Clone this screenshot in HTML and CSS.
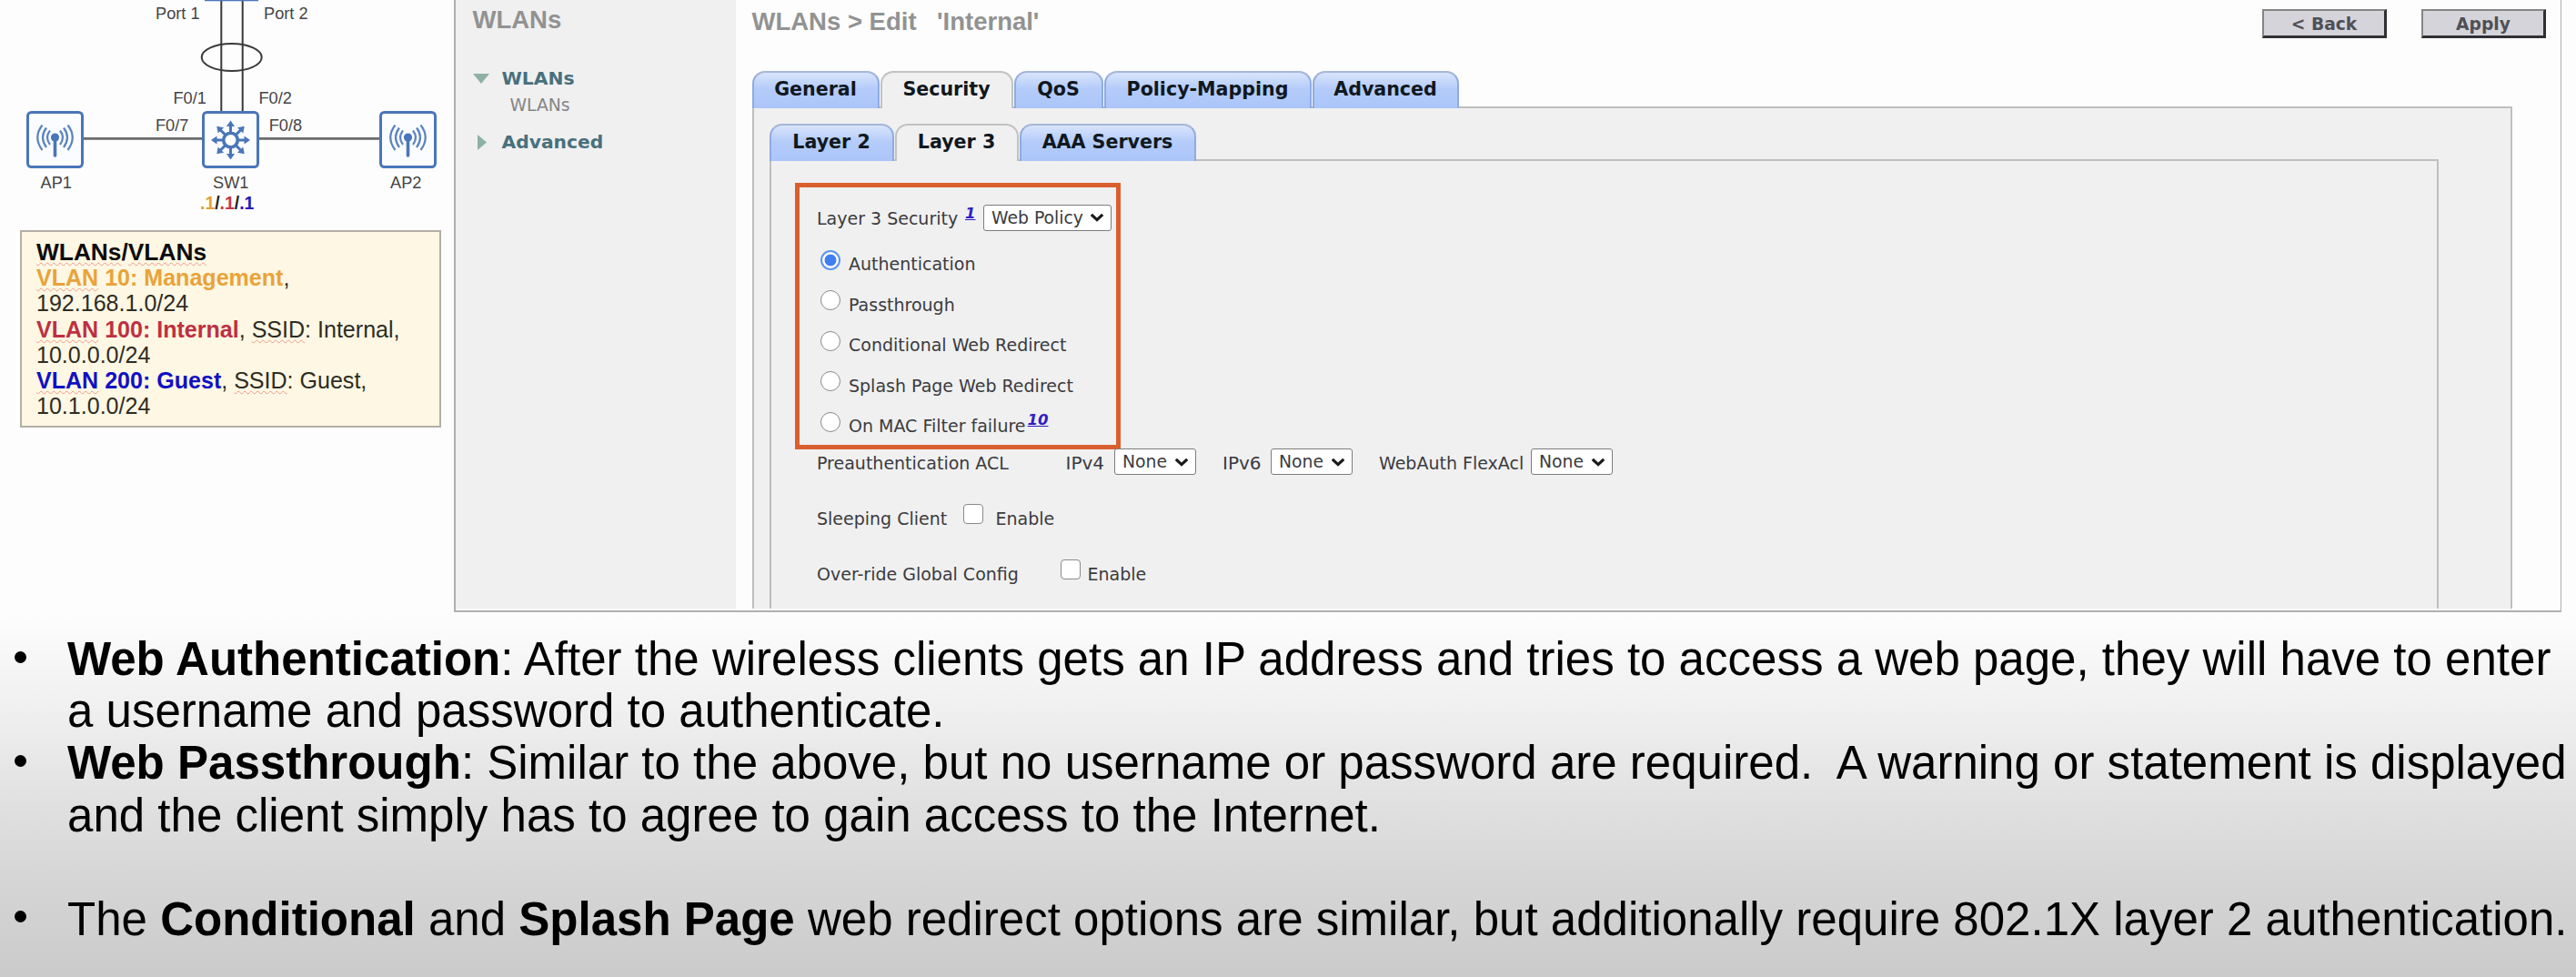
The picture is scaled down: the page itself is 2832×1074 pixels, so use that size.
FILE: index.html
```html
<!DOCTYPE html>
<html lang="en">
<head>
<meta charset="utf-8">
<title>WLANs &gt; Edit 'Internal'</title>
<link rel="stylesheet" href="styles.css">
</head>
<body>
<svg width="0" height="0" class="defs" aria-hidden="true">
  <symbol id="chevron" viewBox="0 0 16 10"><path d="M1.8 1.8 8 7.6 14.2 1.8" fill="none" stroke="#1a1a1a" stroke-width="3.2"/></symbol>
  <symbol id="ap" viewBox="0 0 64 64">
    <rect x="1.5" y="1.5" width="60" height="60" rx="4" fill="#fbfcff" stroke="#4a76b8" stroke-width="3"/>
    <g fill="none" stroke="#5b83c0" stroke-width="2.2">
      <path d="M17.5 15.5Q7 29 17.5 43M22 18.5Q14 29 22 40M26 21.5Q20 29 26 37"/>
      <path d="M45.500 15.500Q56 29 45.500 43M41 18.500Q49 29 41 40M37 21.500Q43 29 37 37"/>
    </g>
    <circle cx="31.500" cy="29" r="4.600" fill="#4a76b8"/>
    <path d="M31.500 29V49" stroke="#4a76b8" stroke-width="3.600" stroke-linecap="round"/>
  </symbol>
  <symbol id="spoke" viewBox="-24 -24 48 48"><path d="M0-8V-17" stroke="#4a76b8" stroke-width="3"/><path d="M0-21.500 4.500-15H-4.500Z" fill="#4a76b8"/></symbol>
</svg>
<main class="slide">
  <section class="top">
    <aside class="topology">
      <svg class="diagram" width="499" height="246" viewBox="0 0 499 246">
        <g fill="none" stroke="#3a3a3a" stroke-width="2">
          <path d="M243.300 0V123M266.700 0V123"/>
          <ellipse cx="254.700" cy="63" rx="33" ry="15"/>
        </g>
        <path d="M225 0H284" stroke="#4a76b8" stroke-width="2.500"/>
        <path d="M91 152.300H223M284 152.300H418" stroke="#6b6b6b" stroke-width="2.800"/>
        <use href="#ap" x="29" y="122" width="64" height="64"/>
        <use href="#ap" x="417" y="122" width="64" height="64"/>
        <rect x="223.500" y="123.500" width="60" height="60" rx="4" fill="#fbfcff" stroke="#4a76b8" stroke-width="3"/>
        <g transform="translate(253.500 154)">
          <circle r="7.800" fill="#fff" stroke="#4a76b8" stroke-width="3.600"/>
          <g id="cross"><use href="#spoke" x="-24" y="-24" width="48" height="48"/><use href="#spoke" x="-24" y="-24" width="48" height="48" transform="rotate(90)"/><use href="#spoke" x="-24" y="-24" width="48" height="48" transform="rotate(180)"/><use href="#spoke" x="-24" y="-24" width="48" height="48" transform="rotate(270)"/></g>
          <use href="#cross" transform="rotate(45)"/>
        </g>
        <g class="labels">
          <text x="171" y="21">Port 1</text><text x="290" y="21">Port 2</text>
          <text x="190.500" y="114">F0/1</text><text x="284.500" y="114">F0/2</text>
          <text x="171" y="143.500">F0/7</text><text x="295.700" y="143.500">F0/8</text>
          <text x="44.500" y="206.500">AP1</text><text x="234" y="206.500">SW1</text><text x="429" y="206.500">AP2</text>
        </g>
        <text class="hosts" x="220" y="229.500"><tspan class="orange">.1</tspan>/<tspan class="red">.1</tspan>/<tspan class="blue">.1</tspan></text>
      </svg>
      <div class="note">
        <p class="note-title"><b><u>WLANs</u>/<u>VLANs</u></b></p>
        <p><b class="orange"><u>VLAN</u> 10: Management</b>,</p>
        <p>192.168.1.0/24</p>
        <p><b class="red"><u>VLAN</u> 100: Internal</b>, <u>SSID</u>: Internal,</p>
        <p>10.0.0.0/24</p>
        <p><b class="blue"><u>VLAN</u> 200: Guest</b>, <u>SSID</u>: Guest,</p>
        <p>10.1.0.0/24</p>
      </div>
    </aside>

    <div class="wlc">
      <nav class="side">
        <h2>WLANs</h2>
        <div class="nav-item"><svg width="32" height="20" viewBox="0 0 32 20"><path d="M0 5H18L9 16Z" fill="#8fb0a4"/></svg>WLANs</div>
        <div class="nav-sub">WLANs</div>
        <div class="nav-item second"><svg width="32" height="20" viewBox="0 0 32 20"><path d="M5 2V19L15 10.500Z" fill="#8fb0a4"/></svg>Advanced</div>
      </nav>
      <div class="content">
        <header class="head">
          <h1><span class="crumb">WLANs &gt; Edit</span><span>'Internal'</span></h1>
          <div class="actions"><button>&lt; Back</button><button>Apply</button></div>
        </header>
        <div class="tabs">
          <div class="tab t-general">General</div><div class="tab active t-security">Security</div><div class="tab t-qos">QoS</div><div class="tab t-policy">Policy-Mapping</div><div class="tab t-advanced">Advanced</div>
        </div>
        <div class="outer">
          <div class="tabs">
            <div class="tab t-l2">Layer 2</div><div class="tab active t-l3">Layer 3</div><div class="tab t-aaa">AAA Servers</div>
          </div>
          <div class="inner">
            <div class="highlight">
              <div class="row policy"><span>Layer 3 Security</span><a class="ref">1</a><span class="select">Web Policy<svg width="16" height="10"><use href="#chevron"/></svg></span></div>
              <label class="option"><input type="radio" name="l3" checked>Authentication</label>
              <label class="option"><input type="radio" name="l3">Passthrough</label>
              <label class="option"><input type="radio" name="l3">Conditional Web Redirect</label>
              <label class="option"><input type="radio" name="l3">Splash Page Web Redirect</label>
              <label class="option"><input type="radio" name="l3">On MAC Filter failure<a class="ref">10</a></label>
            </div>
            <div class="row acl"><span class="up">Preauthentication ACL</span><span class="ipv">IPv4</span><span class="select">None<svg width="16" height="10"><use href="#chevron"/></svg></span><span class="ipv">IPv6</span><span class="select">None<svg width="16" height="10"><use href="#chevron"/></svg></span><span>WebAuth FlexAcl</span><span class="select">None<svg width="16" height="10"><use href="#chevron"/></svg></span></div>
            <label class="row sleeping"><span>Sleeping Client</span><input type="checkbox"><span>Enable</span></label>
            <label class="row override"><span>Over-ride Global Config</span><input type="checkbox"><span>Enable</span></label>
          </div>
        </div>
      </div>
    </div>
  </section>

  <ul class="bullets">
    <li><b>Web Authentication</b>: After the wireless clients gets an IP address and tries to access a web page, they will have to enter<br>a username and password to authenticate.</li>
    <li><b>Web Passthrough</b>: Similar to the above, but no username or password are required.&nbsp; A warning or statement is displayed<br>and the client simply has to agree to gain access to the Internet.</li>
    <li class="spaced">The <b>Conditional</b> and <b>Splash Page</b> web redirect options are similar, but additionally require 802.1X layer 2 authentication.</li>
  </ul>
</main>
</body>
</html>
```
FILE: styles.css
```css
* { box-sizing: border-box; }
body { margin: 0; font-family: "Liberation Sans", Arial, sans-serif; color: #000; }
.defs { display: block; height: 0; }
.slide {
  width: 2832px; height: 1074px; overflow: hidden;
  background: linear-gradient(#fdfdfd 0, #fdfdfd 680px, #f5f5f5 735px, #ededed 800px, #e1e1e1 880px, #d6d6d6 960px, #cbcbcb 1074px);
}
.top { display: flex; height: 673px; }
.orange { color: #e8a33a; fill: #e0a23c; }
.red { color: #bd3040; fill: #c03a4c; }
.blue { color: #1010c4; fill: #2a18b8; }

/* topology */
.topology { flex: none; width: 499px; }
.diagram { display: block; }
.labels { font-size: 18.2px; fill: #454545; }
.hosts { font-size: 19.4px; font-weight: bold; fill: #222; }
.note {
  width: 463px; height: 217px; margin: 7px 0 0 22px; padding: 8px 0 0 16px;
  border: 2px solid #b3afa6; background: #fdf7e3;
  font-size: 25.050px; line-height: 28.200px; color: #2e2c24; white-space: nowrap;
}
.note p { margin: 0; }
.note-title { font-size: 26.300px; color: #0c0c0c; }
.note u { text-decoration: underline wavy rgba(225, 90, 80, .55) 1px; text-underline-offset: 2px; text-decoration-skip-ink: none; }

/* controller window */
.wlc {
  display: flex; flex: none; width: 2317px; height: 673px; padding-bottom: 2px;
  border: solid #b0b0b0; border-width: 0 1.500px 2px 2px; background: #fdfdfd;
  font-family: "DejaVu Sans", Verdana, sans-serif; font-size: 19px; color: #3b3b3f;
}
.side { flex: none; width: 308px; padding-left: 18.500px; background: #f0f0f0; }
h1, h2 { margin: 0; font: bold 27.500px "Liberation Sans", Arial, sans-serif; color: #929292; white-space: nowrap; }
.side h2 { line-height: 43px; margin-bottom: 28px; }
.nav-item { display: flex; align-items: center; height: 30px; font-weight: bold; font-size: 20.300px; color: #48707e; }
.nav-sub { height: 29px; line-height: 30px; padding-left: 41px; font-size: 18.800px; color: #858585; }
.second { margin-top: 11px; }
.content { flex: 1; display: flex; flex-direction: column; padding-left: 17.500px; min-width: 0; }
.head { display: flex; flex: none; justify-content: space-between; height: 78px; padding-right: 16px; }
h1 { display: flex; line-height: 47px; }
.crumb { width: 203.500px; }
.actions { display: flex; gap: 38px; padding-top: 9.500px; }
button {
  width: 137px; height: 32px; padding: 2px 0 0; border: solid; border-width: 2px 3px 3px 2px;
  border-color: #858585 #303034 #303034 #858585; background: #d5d4da;
  font: bold 18.700px "DejaVu Sans", Verdana, sans-serif; color: #505056;
}
.tabs { display: flex; flex: none; gap: 1px; height: 41px; margin-bottom: -2px; position: relative; }
.tab {
  display: flex; align-items: center; justify-content: center; height: 41px; padding-bottom: 3px;
  border: 2px solid #8fabe0; border-top-color: #a5b6d8; border-bottom: 0; border-radius: 14px 14px 0 0;
  background: linear-gradient(#d8e4fb, #b5ccfa 45%, #abc5f9);
  font-size: 20.600px; font-weight: bold; color: #101820; white-space: nowrap;
}
.tab.active { border-color: #c2c2c2; background: #f0f0f0; }
.t-general { width: 140px; } .t-security { width: 146px; } .t-qos { width: 98px; }
.t-policy { width: 228px; } .t-advanced { width: 161px; }
.t-l2 { width: 137px; } .t-l3 { width: 136px; } .t-aaa { width: 194px; }
.outer {
  flex: 1; width: 1935px; padding: 17px 0 0 17px; display: flex; flex-direction: column;
  border: 2px solid #bebebe; border-bottom: 0; background: #f0f0f0; min-height: 0;
}
.inner { flex: 1; width: 1835px; padding: 24px 0 0 26px; border: 2px solid #bebebe; border-bottom: 0; min-height: 0; }

/* form */
.highlight { width: 358.500px; height: 293px; padding: 6.500px 0 0 19.500px; border: 5px solid #d9602e; }
.row { display: grid; align-items: center; height: 31px; white-space: nowrap; }
.row.policy { height: 55.500px; grid-template-columns: 163px 20px 141px; }
.option { display: flex; align-items: center; height: 44.500px; white-space: nowrap; }
.option input { margin: 0 9px 9px 4px; }
.ref { font-weight: bold; font-style: italic; font-size: 16.500px; color: #2f1fc4; text-decoration: underline; align-self: flex-start; }
.policy .ref { margin-top: 12px; }
.option .ref { margin: 6px 0 0 2px; }
input { appearance: none; width: 22px; height: 22px; border: 1.500px solid #8a8a8a; background: #fff; margin: 0; }
input[type=radio] { border-radius: 50%; }
input[type=radio]:checked { border: 2px solid #5a94f0; background: radial-gradient(circle, #3f7ef0 6px, #fff 6.800px); }
input[type=checkbox] { border-radius: 4px; margin-bottom: 10px; }
.select {
  display: flex; align-items: center; justify-content: space-between; height: 29px; padding: 0 7px 0 8px;
  border: 1.500px solid #7c7c7c; border-radius: 3px; background: #fff; margin-top: -2px; font-size: 18.800px;
}
.inner > .row { margin-left: 24.500px; }
.row.acl { margin-top: -1px; grid-template-columns: 273.500px 53.500px 90px 82px 90px 196px 90px; }
.acl .ipv { font-size: 20px; }
.acl .ipv:nth-of-type(4), .acl > span:nth-of-type(6) { padding-left: 29px; }
.row.sleeping { margin-top: 29.700px; grid-template-columns: 160.500px 36px 80px; }
.row.override { margin-top: 30.700px; grid-template-columns: 267.500px 30px 80px; }

/* bullets */
.bullets { list-style: none; margin: 0; padding: 23.300px 0 0 74px; font-size: 51.040px; line-height: 57.100px; white-space: nowrap; }
.bullets li { position: relative; }
.bullets li::before { content: ""; position: absolute; left: -58px; top: 19.500px; width: 13px; height: 13px; border-radius: 50%; background: #000; }
.bullets .spaced { margin-top: 57.100px; }
```
